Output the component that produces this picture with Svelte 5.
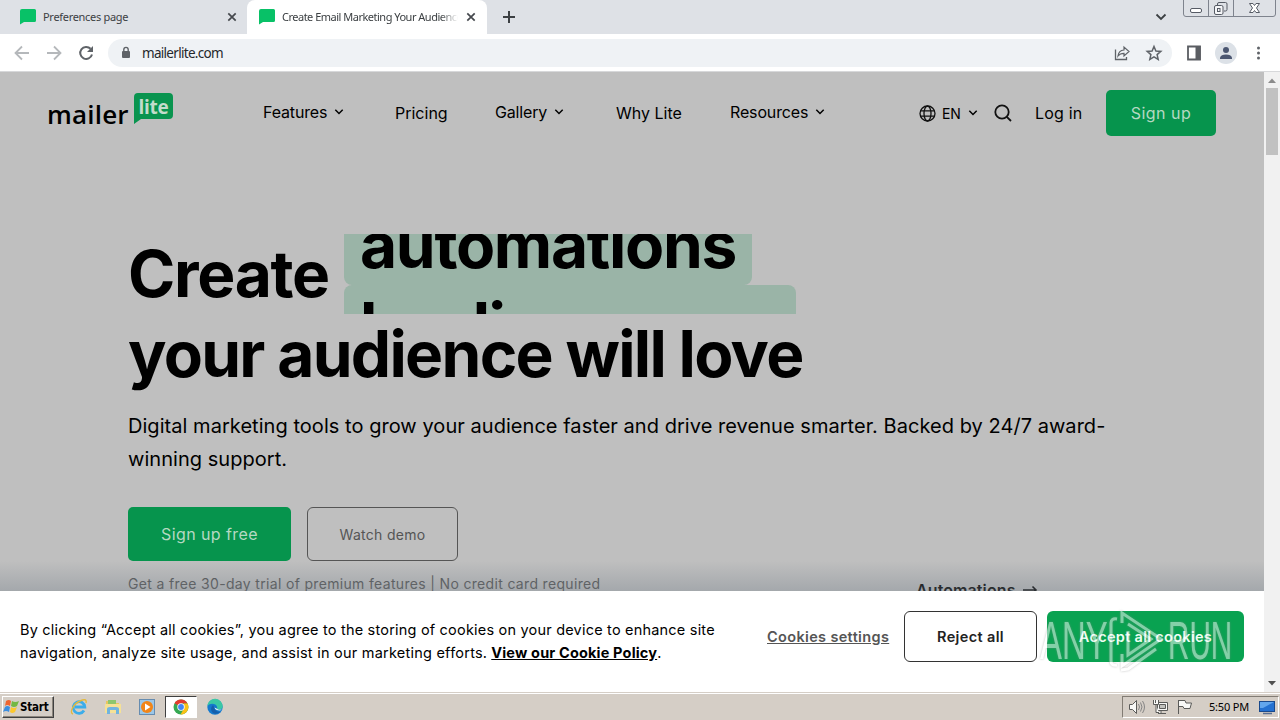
<script>
    const tabs = [
        { title: "Preferences page", active: false },
        { title: "Create Email Marketing Your Audience", active: true },
    ];

    const links = [
        { label: "Features", menu: true },
        { label: "Pricing", menu: false },
        { label: "Gallery", menu: true },
        { label: "Why Lite", menu: false },
        { label: "Resources", menu: true },
    ];

    const words = ["automations", "landing pages"];
</script>

{#snippet chevron()}
    <svg class="chevron" width="10" height="8" viewBox="0 0 10 8">
        <path d="M1.3 1.8 L5 5.5 L8.7 1.8" />
    </svg>
{/snippet}

<div class="screen">
    <header class="tabs">
        {#each tabs as tab}
            <div class="tab" class:active={tab.active}>
                <svg class="favicon" width="17" height="16" viewBox="0 0 17 16">
                    <path d="M2 0H14.500Q16 0 16 1.500V11.500Q16 13 14.500 13H4L0 15.500V2Q0 0 2 0Z" fill="#08c167" />
                </svg>
                <span class="tab-title">{tab.title}</span>
                <svg width="10" height="10" viewBox="0 0 10 10">
                    <path d="M1.3 1.3L8.7 8.7M8.7 1.3L1.3 8.7" stroke="#45484d" stroke-width="1.7" />
                </svg>
            </div>
        {/each}
        <svg class="new-tab" width="14" height="14" viewBox="0 0 14 14">
            <path d="M7 1V13M1 7H13" stroke="#3c4043" stroke-width="2" />
        </svg>
        <svg class="tab-search" width="12" height="8" viewBox="0 0 12 8">
            <path d="M1.5 1.5L6 6L10.5 1.5" stroke="#3c4043" stroke-width="1.8" fill="none" />
        </svg>
        <svg class="window-buttons" width="94" height="18" viewBox="0 0 94 18">
            <g fill="none" stroke="#7e838d">
                <path d="M.5 0V14Q.5 16.5 3 16.5H90Q92.5 16.5 92.5 14V0M25.5 0V16M50.5 0V16" />
                <rect x="7.5" y="8.5" width="11" height="4" rx="1.5" stroke="#565b65" fill="#fff" />
                <path d="M34.5 5V4Q34.5 2.500 36 2.500H42.500Q44 2.500 44 4V9.500Q44 11 42.500 11H41" stroke="#565b65" />
                <rect x="31.500" y="5.500" width="8.500" height="9" rx="1.500" stroke="#565b65" fill="#f5f6f8" />
                <rect x="34.500" y="8.500" width="2.500" height="3" stroke="#565b65" />
                <path d="M66.500 3.500H70L71.500 5.500L73 3.500H76.500L73.500 8L76.500 12.500H73L71.500 10.500L70 12.500H66.500L69.500 8Z" stroke="#565b65" fill="#fff" />
            </g>
        </svg>
    </header>

    <div class="toolbar">
        <svg width="108" height="36" viewBox="0 0 108 36" fill="none" stroke-width="1.8">
            <path d="M29 18H16M22 11.500L15.500 18L22 24.500" stroke="#b5b8bb" />
            <path d="M47 18H60M54 11.500L60.500 18L54 24.500" stroke="#b5b8bb" />
            <path d="M90.600 13.800A6 6 0 1 0 92 19.500" stroke="#5f6368" stroke-width="2" />
            <path d="M93 11V17H87Z" fill="#5f6368" />
        </svg>
        <div class="address">
            <svg class="lock" width="10" height="14" viewBox="0 0 10 14">
                <rect x="1" y="5" width="8" height="7" rx="1" fill="#5f6368" />
                <path d="M2.800 6V3.600A2.200 2.200 0 0 1 7.200 3.600V6" fill="none" stroke="#5f6368" stroke-width="1.400" />
            </svg>
            <span class="url">mailerlite.com</span>
            <svg width="52" height="18" viewBox="0 0 52 18" fill="none" stroke="#5f6368">
                <path d="M1.500 5.500V15.500H12.500V13" stroke-width="1.300" />
                <path d="M4 12C4.500 8 7 6.200 10 6V3L15 7.500L10 12V9.300C7.500 9.300 5.500 10 4 12Z" stroke-width="1.200" />
                <path d="M40 2.500L41.900 7L46.800 7.400L43.100 10.600L44.200 15.400L40 12.900L35.800 15.400L36.900 10.600L33.200 7.400L38.100 7Z" stroke-width="1.500" />
            </svg>
        </div>
        <svg width="108" height="36" viewBox="0 0 108 36">
            <path d="M16 11.500H28V24.500H16Z" fill="none" stroke="#5a5d62" stroke-width="1.800" />
            <path d="M23.500 11H28.500V25H23.500Z" fill="#5a5d62" />
            <circle cx="54" cy="18" r="11" fill="#dce1e7" />
            <circle cx="54" cy="15" r="3" fill="#4b5671" />
            <path d="M48 24V22.500Q49 19.500 54 19.500T60 22.500V24Z" fill="#4b5671" />
            <g fill="#5f6368">
                <circle cx="86.500" cy="13" r="1.500" />
                <circle cx="86.500" cy="18" r="1.500" />
                <circle cx="86.500" cy="23" r="1.500" />
            </g>
        </svg>
    </div>

    <main class="viewport">
        <div class="page">
            <nav class="nav">
                <div class="logo">
                    <span class="mailer">mailer</span>
                    <span class="lite">lite</span>
                </div>
                {#each links as link}
                    <a class="link" class:plain={!link.menu} href="#top">
                        <span>{link.label}</span>
                        {#if link.menu}{@render chevron()}{/if}
                    </a>
                {/each}
                <div class="lang">
                    <svg width="17" height="17" viewBox="0 0 17 17" fill="none" stroke="#111" stroke-width="1.300">
                        <circle cx="8.500" cy="8.500" r="7.500" />
                        <ellipse cx="8.500" cy="8.500" rx="3.500" ry="7.500" />
                        <path d="M1.700 5.800H15.300M1.700 11.200H15.300" />
                    </svg>
                    <span class="code">EN</span>
                    {@render chevron()}
                </div>
                <svg class="search" width="18" height="18" viewBox="0 0 18 18" fill="none" stroke="#111" stroke-width="1.800">
                    <circle cx="8" cy="8" r="6.700" />
                    <path d="M12.800 12.800L17 17" />
                </svg>
                <a class="login" href="#login">Log in</a>
                <button class="signup">Sign up</button>
            </nav>

            <section class="hero">
                <h1>
                    <span class="line">
                        <span class="create">Create</span>
                        <span class="rotator">
                            {#each words as word}
                                <span class="word">{word}</span>
                            {/each}
                        </span>
                    </span>
                    <span class="line love">your audience will love</span>
                </h1>
                <p class="lead">
                    <span>Digital marketing tools to grow your audience faster and drive revenue smarter. Backed by 24/7 award-</span><br />
                    <span>winning support.</span>
                </p>
                <div class="actions">
                    <button class="free">Sign up free</button>
                    <button class="demo">Watch demo</button>
                </div>
                <div class="below">
                    <span class="trial">Get a free 30-day trial of premium features | No credit card required</span>
                    <span class="automations">Automations
                        <svg width="15" height="10" viewBox="0 0 15 10">
                            <path d="M0 5H13M9.500 1.500L13 5L9.500 8.500" fill="none" stroke="#000" stroke-width="1.600" />
                        </svg>
                    </span>
                </div>
            </section>

            <div class="shade"></div>
            <aside class="cookies">
                <p class="consent">
                    <span>By clicking “Accept all cookies”, you agree to the storing of cookies on your device to enhance site</span><br />
                    <span class="second">navigation, analyze site usage, and assist in our marketing efforts.</span><a href="#policy">View our Cookie Policy</a>.
                </p>
                <a class="settings" href="#settings">Cookies settings</a>
                <button class="reject">Reject all</button>
                <button class="accept">Accept all cookies</button>
            </aside>
            <div class="watermark">
                <span class="mark-text any">ANY</span>
                <svg width="56" height="64" viewBox="0 0 56 64" fill="none" stroke="#fff" stroke-width="3">
                    <path d="M14 14V4L53 30L14 57V45" />
                    <path d="M20 15L43 30L20 46V22" />
                    <path d="M9 10Q3 9 3 14V52Q3 57 9 56M13 61L20 60L48 40" />
                </svg>
                <span class="mark-text">RUN</span>
            </div>
        </div>
        <div class="scrollbar">
            <svg width="16" height="16" viewBox="0 0 16 16"><path d="M4 11L8 6.500L12 11Z" fill="#8b8b8b" /></svg>
            <div class="thumb"></div>
            <svg width="16" height="16" viewBox="0 0 16 16"><path d="M4 5L8 9.500L12 5Z" fill="#505050" /></svg>
        </div>
    </main>

    <footer class="taskbar">
        <div class="start">
            <svg width="17" height="16" viewBox="0 0 17 16">
                <path d="M3 2Q6 0 8 2L7 7Q4 5 2 7Z" fill="#ef6530" />
                <path d="M9 2Q12 4 16 2L14 7Q11 9 8 7Z" fill="#74b843" />
                <path d="M2 8Q4 6 7 8L6 13Q3 11 0 13Z" fill="#3c8ee0" />
                <path d="M8 8Q11 10 14 8L12 13Q9 15 7 13Z" fill="#fcc82e" />
            </svg>
            <span>Start</span>
        </div>
        <div class="app">
            <svg width="18" height="18" viewBox="0 0 18 18" fill="none">
                <path d="M14 12.500A5.800 5.800 0 1 1 14.800 9H5" stroke="#3badea" stroke-width="2.800" />
                <path d="M3 16C-1 15 3 6 10 3C14 1 17 1 16 5" stroke="#e2b93e" stroke-width="1.400" />
            </svg>
        </div>
        <div class="app">
            <svg width="18" height="18" viewBox="0 0 18 18">
                <path d="M2 3H8L9 5H15V15H2Z" fill="#e8c65f" />
                <path d="M4 2H12V6H4Z" fill="#8cc66d" />
                <path d="M1 6H17V15H1Z" fill="#f5e196" />
                <path d="M3 16V11Q3 9 6 9H12Q15 9 15 11V16H12V12H6V16Z" fill="#71b4df" />
            </svg>
        </div>
        <div class="app">
            <svg width="18" height="18" viewBox="0 0 18 18">
                <rect x="1.500" y="1.500" width="15" height="15" fill="#9bc7e8" stroke="#668cb0" />
                <circle cx="9" cy="9" r="6" fill="#f18518" />
                <path d="M7 5.500L12.500 9L7 12.500Z" fill="#fff" />
            </svg>
        </div>
        <div class="app current">
            <svg width="16" height="16" viewBox="0 0 16 16">
                <circle cx="8" cy="8" r="7.500" fill="#35a852" />
                <path d="M8 8L1.500 4.200A7.500 7.500 0 0 1 14.500 4.500H8Z" fill="#e33b2e" />
                <path d="M14.500 4.500A7.500 7.500 0 0 1 7.500 15.500L11 9.500L10.500 4.500Z" fill="#fbc116" />
                <circle cx="8" cy="8" r="3.700" fill="#fff" />
                <circle cx="8" cy="8" r="2.900" fill="#4285f4" />
            </svg>
        </div>
        <div class="app">
            <svg width="18" height="18" viewBox="0 0 18 18">
                <circle cx="9" cy="9" r="7.700" fill="#1479ce" />
                <path d="M1.300 8A7.700 7.700 0 0 1 16.700 9Q16 12 11 11.500Q12 7 8 6Q4 5 1.300 8Z" fill="#3ac8a5" />
                <path d="M7 7Q3 11 7 15Q10 17 14.500 14Q9 14 8.500 10Z" fill="#155eaa" />
                <path d="M8.500 9.500Q9 12.500 14 12.500L16 11.500Q12 12 11 10.800Z" fill="#e8f5fa" />
            </svg>
        </div>
        <div class="tray">
            <svg width="68" height="18" viewBox="0 0 68 18" fill="#f8f8f6" stroke="#5b5b59">
                <path d="M2.500 6.500H5.500L9.500 2.500V15.500L5.500 11.500H2.500Z" />
                <path d="M11.500 6Q13.500 9 11.500 12M13.500 4.500Q16.500 9 13.500 13.500M15.500 3Q19.500 9 15.500 15" fill="none" stroke="#858585" />
                <path d="M30.500 4.500H40.500V12.500H30.500ZM34 13V15.500H31M34 15.500H39" />
                <path d="M32.500 6.500H38.500V10.500H32.500Z" fill="#c3c3bf" />
                <path d="M26.500 2V6.500H31.500V2M28.500 2V5M29 7V14.500H32" />
                <path d="M51.500 2V16M52 2.500H58L59 5H64.500L63 10.500H57L56 8.500H52" />
            </svg>
            <span class="clock">5:50 PM</span>
            <svg width="17" height="15" viewBox="0 0 17 15">
                <rect x=".5" y="1.500" width="15" height="10" fill="#2471d1" stroke="#19498c" />
                <path d="M1 2H15L4 8H1Z" fill="#62a6ed" />
                <path d="M4 13.500H13" stroke="#5a6f91" stroke-width="1.500" />
            </svg>
        </div>
    </footer>
</div>

<style>
    :global(body) {
        margin: 0;
        overflow: hidden;
    }
    .screen {
        width: 1280px;
        height: 720px;
        display: flex;
        flex-direction: column;
        background: #fff;
        font-family: Inter, "Liberation Sans", sans-serif;
        color: #000;
    }
    svg {
        display: block;
        flex: none;
    }
    a {
        color: inherit;
        text-decoration: none;
    }
    button {
        font: inherit;
        border: 0;
        padding: 0;
        margin: 0;
        box-sizing: border-box;
        white-space: nowrap;
    }
    .tabs {
        height: 34px;
        flex: none;
        display: flex;
        background: #dee1e6;
        font: 11px "Noto Sans", sans-serif;
        color: #3c4043;
    }
    .tab {
        display: flex;
        align-items: center;
        width: 240px;
        height: 34px;
        box-sizing: border-box;
        padding: 0 11px 0 12px;
    }
    .tab:first-child {
        width: 247px;
        padding: 0 10px 0 20px;
    }
    .active {
        background: #fff;
        border-radius: 8px 8px 0 0;
    }
    .tab-title {
        flex: 1;
        margin: 0 8px 1px 6px;
        white-space: nowrap;
        overflow: hidden;
        letter-spacing: -0.3px;
    }
    .active .tab-title {
        letter-spacing: -0.5px;
        mask-image: linear-gradient(90deg, #000 90%, transparent);
    }
    .new-tab {
        margin: 10px 0 0 15px;
    }
    .tab-search {
        margin: 13px 16px 0 auto;
    }
    .window-buttons {
        margin-right: 3px;
    }
    .toolbar {
        height: 37px;
        flex: none;
        display: flex;
        align-items: center;
        border-bottom: 1px solid #d7d8da;
    }
    .address {
        flex: 1;
        height: 28px;
        border-radius: 14px;
        background: #eff2f5;
        display: flex;
        align-items: center;
        padding: 0 6px 0 13px;
    }
    .url {
        flex: 1;
        margin-left: 11px;
        font: 13.5px "Noto Sans", sans-serif;
        letter-spacing: -0.7px;
        color: #25282c;
    }
    .viewport {
        height: 620px;
        flex: none;
        display: flex;
    }
    .page {
        width: 1264px;
        height: 620px;
        background: #bfbfbf;
        position: relative;
        overflow: hidden;
    }
    .nav {
        display: grid;
        grid-template-columns: 215px 132px 100px 121px 114px 189px 75px 41px 71px 110px;
        align-items: center;
        height: 46px;
        padding: 18px 0 0 48px;
        font-size: 16px;
    }
    .logo {
        display: flex;
        height: 46px;
        font-family: "Open Sans", sans-serif;
    }
    .mailer {
        font-size: 26px;
        font-weight: 600;
        line-height: 48px;
        letter-spacing: 0.2px;
        width: 87px;
        margin-left: -1px;
    }
    .lite {
        width: 39px;
        height: 31px;
        margin-top: 3px;
        background: #09944f;
        color: #c3dccb;
        font-size: 19px;
        font-weight: 700;
        line-height: 28px;
        letter-spacing: -0.3px;
        text-align: center;
        clip-path: path("M4 0H35Q39 0 39 4V22Q39 26 35 26H7L0 31V4Q0 0 4 0Z");
    }
    .link {
        display: flex;
        align-items: center;
        letter-spacing: -0.15px;
        padding-bottom: 2px;
    }
    .link.plain {
        padding-bottom: 0;
        letter-spacing: 0;
    }
    .link .chevron {
        margin-left: 7px;
    }
    .chevron path {
        fill: none;
        stroke: #000;
        stroke-width: 1.5;
    }
    .lang {
        display: flex;
        align-items: center;
    }
    .code {
        font-size: 14px;
        letter-spacing: -0.2px;
        margin: 1px 7px 0 6px;
    }
    .login {
        letter-spacing: 0.2px;
    }
    .signup,
    .free {
        color: #b5d9c2;
        background: #06944d;
        border-radius: 5px;
        font-size: 16px;
        letter-spacing: 0.5px;
    }
    .signup {
        height: 46px;
    }
    .hero {
        padding: 98px 0 0 128px;
    }
    h1 {
        margin: 0;
        font-size: 64px;
        font-weight: 700;
        line-height: 80px;
        letter-spacing: -1.3px;
        white-space: nowrap;
    }
    .line {
        display: flex;
        height: 80px;
    }
    .love {
        letter-spacing: -1.7px;
    }
    .create {
        width: 216px;
    }
    .rotator {
        height: 80px;
        overflow: hidden;
        display: flex;
        flex-direction: column;
        align-items: flex-start;
    }
    .word {
        height: 80px;
        flex: none;
        padding: 0 16px;
        border-radius: 8px;
        background: #9ab4a7;
    }
    .word:first-child {
        margin-top: -29px;
    }
    .word:last-child {
        padding-top: 1px;
        letter-spacing: -1.53px;
    }
    .lead {
        margin: 16px 0 0;
        font-size: 20px;
        line-height: 33px;
        white-space: nowrap;
        letter-spacing: 0.045px;
    }
    .actions {
        display: flex;
        gap: 16px;
        margin-top: 31px;
    }
    .free {
        width: 163px;
        height: 54px;
        letter-spacing: 0.4px;
    }
    .demo {
        width: 151px;
        height: 54px;
        border: 1px solid #555;
        border-radius: 6px;
        background: none;
        color: #555;
        font-size: 14px;
        letter-spacing: 0.28px;
    }
    .below {
        display: flex;
        height: 30px;
        white-space: nowrap;
    }
    .trial {
        width: 788px;
        padding-top: 14px;
        font-size: 14px;
        line-height: 18px;
        letter-spacing: 0.33px;
        color: #555;
    }
    .automations {
        display: flex;
        align-items: center;
        gap: 7px;
        height: 20px;
        padding-top: 19px;
        font-size: 16px;
        font-weight: 600;
        letter-spacing: 0.1px;
    }
    .shade {
        position: absolute;
        left: 0;
        right: 0;
        top: 489px;
        height: 30px;
        background: linear-gradient(transparent, rgba(120, 130, 140, 0.38));
    }
    .cookies {
        position: absolute;
        left: 0;
        top: 519px;
        width: 1264px;
        height: 101px;
        box-sizing: border-box;
        background: #fff;
        display: flex;
        padding: 20px 0 0 20px;
        font-size: 14.5px;
    }
    .consent {
        width: 747px;
        margin: 7px 0 0;
        line-height: 23px;
        letter-spacing: 0.2px;
        white-space: nowrap;
    }
    .second {
        letter-spacing: 0.23px;
        margin-right: 4px;
    }
    .consent a {
        font-weight: 700;
        letter-spacing: 0.17px;
        text-decoration: underline;
    }
    .settings {
        width: 137px;
        line-height: 51px;
        font-weight: 600;
        letter-spacing: 0.35px;
        color: #555;
        text-decoration: underline;
        white-space: nowrap;
    }
    .reject,
    .accept {
        height: 51px;
        border-radius: 6px;
        font-weight: 600;
        letter-spacing: 0.35px;
    }
    .reject {
        width: 133px;
        margin-right: 10px;
        border: 1px solid #333;
        background: #fff;
        color: #222;
    }
    .accept {
        width: 197px;
        background: #09a251;
        color: #f0fff5;
        letter-spacing: 0.3px;
    }
    .watermark {
        position: absolute;
        left: 1040px;
        top: 537px;
        display: flex;
        align-items: center;
        opacity: 0.5;
        filter: drop-shadow(0 0 1px #888);
    }
    .mark-text {
        width: 62px;
        color: #fff;
        font: 53px/64px "Liberation Sans", sans-serif;
        transform: scaleX(0.56);
        transform-origin: left;
    }
    .any {
        transform: scaleX(0.62);
    }
    .watermark svg {
        margin: 0 4px 0 6px;
    }
    .scrollbar {
        width: 16px;
        height: 620px;
        background: #f1f1f1;
        display: flex;
        flex-direction: column;
        align-items: center;
    }
    .thumb {
        width: 12px;
        height: 67px;
        margin-bottom: auto;
        background: #c1c1c1;
    }
    .taskbar {
        height: 28px;
        box-sizing: border-box;
        flex: none;
        display: flex;
        align-items: center;
        padding: 2px 0 0 2px;
        background: linear-gradient(#d5cec6 0 1px, #fff 1px 2px, #d5cec6 2px);
    }
    .start {
        width: 50px;
        height: 20px;
        display: flex;
        align-items: center;
        border: 1px solid;
        border-color: #fff #404040 #404040 #fff;
        box-shadow: inset -1px -1px #8b857c;
        font: bold 11.5px "DejaVu Sans Condensed", sans-serif;
        letter-spacing: -0.2px;
        margin-right: 9px;
    }
    .app {
        width: 32px;
        height: 22px;
        margin-right: 2px;
        display: flex;
        align-items: center;
        justify-content: center;
        box-sizing: border-box;
    }
    .current {
        background: #fff;
        border: 1px solid;
        border-color: #404040 #fff #fff #404040;
    }
    .tray {
        width: 151px;
        height: 20px;
        margin: 0 1px 0 auto;
        padding-left: 4px;
        display: flex;
        align-items: center;
        border: 1px solid;
        border-color: #827c74 #fff #fff #827c74;
    }
    .clock {
        width: 50px;
        margin: 0 0 1px 14px;
        font: 11px "Noto Sans", sans-serif;
        white-space: nowrap;
        letter-spacing: -0.2px;
    }
</style>
